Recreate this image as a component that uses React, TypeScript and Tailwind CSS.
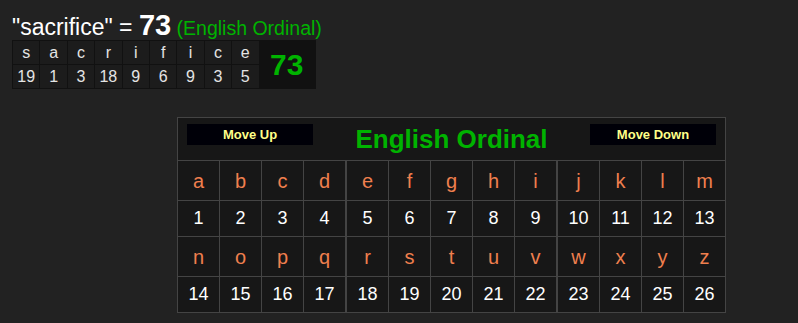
import React from 'react';

const word = ['s', 'a', 'c', 'r', 'i', 'f', 'i', 'c', 'e'];
const alphabet = 'abcdefghijklmnopqrstuvwxyz'.split('');

const value = (ch: string) => ch.charCodeAt(0) - 96;

const SmallTable: React.FC = () => (
  <div className="flex w-[304px] h-[49px] bg-[#111] border border-[#111] ml-[12px]">
    <div className="flex flex-col gap-px">
      <div className="flex gap-px">
        {word.map((c, i) => (
          <div key={i} className="w-[26.4px] h-[23px] bg-[#1c1c1c] flex items-center justify-center text-[16px] text-[#e4e4e4]">
            {c}
          </div>
        ))}
      </div>
      <div className="flex gap-px">
        {word.map((c, i) => (
          <div key={i} className="w-[26.4px] h-[23px] bg-[#1c1c1c] flex items-center justify-center text-[16px] text-[#e4e4e4]">
            {value(c)}
          </div>
        ))}
      </div>
    </div>
    <div className="flex-1 flex items-center justify-center text-[30px] font-bold text-[#00b300]">73</div>
  </div>
);

const Cell: React.FC<{ idx: number; children: React.ReactNode; letter?: boolean }> = ({ idx, children, letter }) => {
  const col = idx % 13;
  const edge = col === 0 ? 'w-[41px]' : col === 4 || col === 9 ? 'w-[43px] border-l-2' : 'w-[42px] border-l';
  return (
    <div
      className={`${edge} border-t border-[#444] flex items-center justify-center ${
        letter ? 'h-[40px] text-[20px] text-[#ef7f4e]' : 'h-[36px] text-[18px] text-white'
      }`}
    >
      {children}
    </div>
  );
};

const CipherTable: React.FC = () => {
  const rows = [alphabet.slice(0, 13), alphabet.slice(13)];
  return (
    <div className="ml-[177px] mt-[28px] w-[549px] border border-[#444] bg-[#171717]">
      <div className="h-[42px] flex items-center justify-between px-[9px]">
        <button className="self-start mt-[6px] w-[126px] h-[21px] bg-[#000008] text-[13px] font-bold text-[#ffff88]">Move Up</button>
        <div className="text-[26px] font-bold text-[#00b300] leading-none">English Ordinal</div>
        <button className="self-start mt-[6px] w-[126px] h-[21px] bg-[#000008] text-[13px] font-bold text-[#ffff88]">Move Down</button>
      </div>
      {rows.map((r, ri) => (
        <React.Fragment key={ri}>
          <div className="flex">
            {r.map((c, i) => (
              <Cell key={c} idx={i} letter>
                {c}
              </Cell>
            ))}
          </div>
          <div className="flex">
            {r.map((c, i) => (
              <Cell key={c} idx={i}>
                {value(c)}
              </Cell>
            ))}
          </div>
        </React.Fragment>
      ))}
    </div>
  );
};

export default function App() {
  return (
    <div className="w-[798px] h-[323px] bg-[#222] overflow-hidden font-['Liberation_Sans',Arial,sans-serif]">
      <div className="pl-[12px] pt-[4px] h-[40px] flex items-baseline whitespace-pre">
        <span className="text-[23px] text-white">"sacrifice" = </span>
        <span className="text-[29px] font-bold text-white">73</span>
        <span className="text-[19.5px] text-[#00b300]"> (English Ordinal)</span>
      </div>
      <SmallTable />
      <CipherTable />
    </div>
  );
}
